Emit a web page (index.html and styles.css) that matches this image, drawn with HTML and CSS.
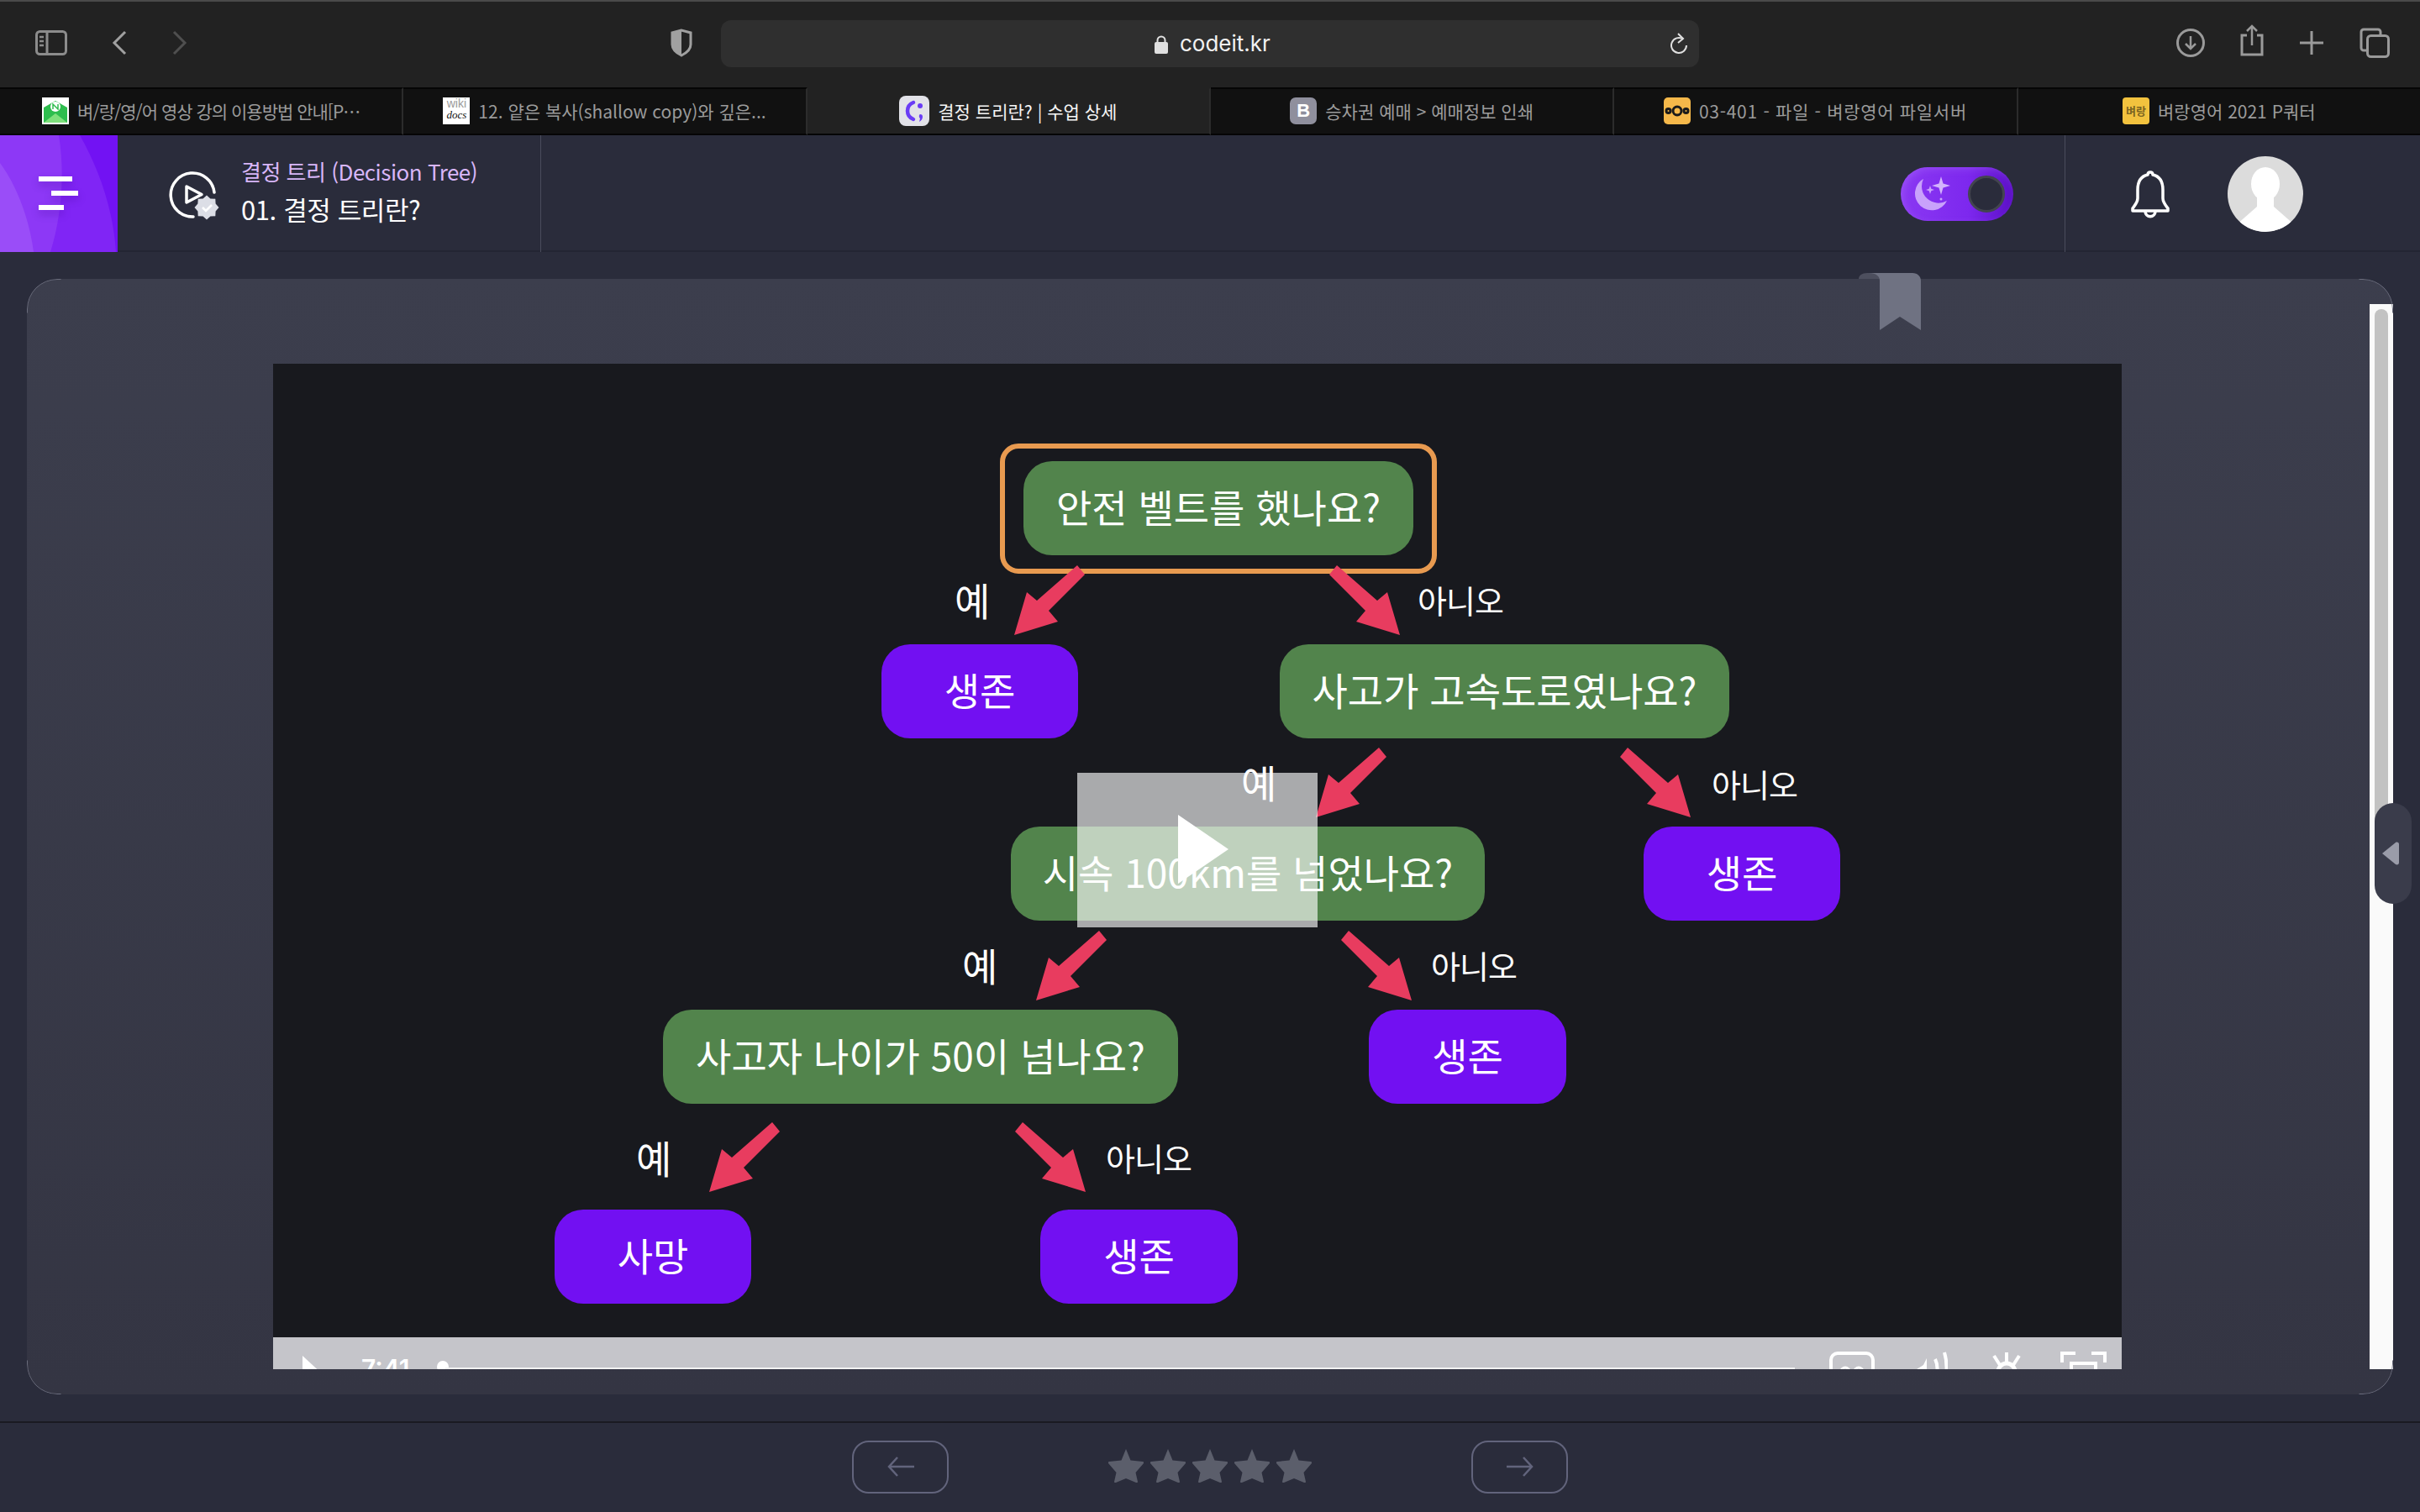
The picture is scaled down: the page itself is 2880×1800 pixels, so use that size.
FILE: index.html
```html
<!DOCTYPE html>
<html lang="ko">
<head>
  <meta charset="UTF-8">
  <title>결정 트리란? | 수업 상세</title>
  <link rel="stylesheet" href="styles.css">
</head>
<body>
  <!-- browser chrome -->
  <div class="toolbar">
    <svg class="tb-sidebar" width="38" height="30" viewBox="0 0 38 30"><rect x="1.5" y="1.5" width="35" height="27" rx="4" fill="none" stroke="#8c8c8c" stroke-width="3"/><path d="M14 2v26" stroke="#8c8c8c" stroke-width="3"/><path d="M5 8h5M5 13h5M5 18h5" stroke="#8c8c8c" stroke-width="2.5"/></svg>
    <svg class="tb-back" width="18" height="30" viewBox="0 0 18 30"><path d="M16 2 3 15l13 13" fill="none" stroke="#a0a0a0" stroke-width="3"/></svg>
    <svg class="tb-forward" width="18" height="30" viewBox="0 0 18 30"><path d="M2 2l13 13L2 28" fill="none" stroke="#4f4f4f" stroke-width="3"/></svg>
    <svg class="tb-shield" width="28" height="34" viewBox="0 0 28 34"><path d="M14 2 3 5v14c0 6 5 10 11 13 6-3 11-7 11-13V5z" fill="none" stroke="#a0a0a0" stroke-width="3"/><path d="M14 2 3 5v14c0 6 5 10 11 13z" fill="#a0a0a0"/></svg>
    <div class="urlbar">
      <svg width="16" height="23" viewBox="0 0 16 23"><path d="M3.5 11V7a4.500 4.500 0 0 1 9 0v4" fill="none" stroke="#e0e0e0" stroke-width="2"/><rect y="9" width="16" height="14" rx="2" fill="#e0e0e0"/></svg>
      <span class="url-text">codeit.kr</span>
      <svg class="url-reload" width="22" height="26" viewBox="0 0 22 26"><path d="M16 7.500A9 9 0 1 0 20 15" fill="none" stroke="#e0e0e0" stroke-width="2"/><path d="M10 1l6 6-6 5" fill="none" stroke="#e0e0e0" stroke-width="2"/></svg>
    </div>
    <svg class="tb-download" width="34" height="34" viewBox="0 0 34 34"><circle cx="17" cy="17" r="15.500" fill="none" stroke="#9a9a9a" stroke-width="3"/><path d="M17 9v15M11 18l6 6 6-6" fill="none" stroke="#9a9a9a" stroke-width="2.500"/></svg>
    <svg class="tb-share" width="30" height="38" viewBox="0 0 30 38"><path d="M9 13H3v23h24V13h-6" fill="none" stroke="#9a9a9a" stroke-width="3"/><path d="M15 25V2M9 8l6-6 6 6" fill="none" stroke="#9a9a9a" stroke-width="2.500"/></svg>
    <svg class="tb-plus" width="28" height="28" viewBox="0 0 28 28"><path d="M14 0v28M0 14h28" stroke="#9a9a9a" stroke-width="3"/></svg>
    <svg class="tb-windows" width="36" height="36" viewBox="0 0 36 36"><path d="M8 27H5a3 3 0 0 1-3-3V5a3 3 0 0 1 3-3h17a3 3 0 0 1 3 3v3" fill="none" stroke="#9a9a9a" stroke-width="3"/><rect x="9.500" y="9.500" width="25" height="25" rx="4" fill="none" stroke="#9a9a9a" stroke-width="3"/></svg>
  </div>

  <div class="tabs">
    <div class="tab">
      <svg class="favicon" width="32" height="32" viewBox="0 0 32 32"><rect width="32" height="32" fill="#fff"/><path d="M2 12 16 4l14 8v18H2z" fill="#2ebd4e"/><path d="M2 30 16 19l14 11z" fill="#7fe07c"/><circle cx="16" cy="11" r="6" fill="#fff"/><path d="M13 14V8l6 6V8" fill="none" stroke="#2ebd4e" stroke-width="1.500"/></svg>
      <span class="tab-title title-tight">벼/랑/영/어 영상 강의 이용방법 안내[P…</span>
    </div>
    <div class="tab">
      <div class="favicon fav-wiki"><span class="wiki-a">wiki</span><span class="wiki-b">docs</span></div>
      <span class="tab-title">12. 얕은 복사(shallow copy)와 깊은...</span>
    </div>
    <div class="tab active">
      <svg class="favicon" width="36" height="36" viewBox="0 0 36 36"><rect width="36" height="36" rx="8" fill="#e2e2e8"/><path d="M17 8c-5 2-7 6-7 10s2 8 7 10" fill="none" stroke="#6a3cf5" stroke-width="4.500" stroke-linecap="round"/><circle cx="25" cy="12" r="3" fill="#6a3cf5"/><path d="M25 22c2 0 3 1 3 3 0 3-2 5-4 6l1-4c-2-2-1-5 0-5z" fill="#6a3cf5"/></svg>
      <span class="tab-title">결정 트리란? | 수업 상세</span>
    </div>
    <div class="tab">
      <div class="favicon fav-b">B</div>
      <span class="tab-title">승차권 예매 &gt; 예매정보 인쇄</span>
    </div>
    <div class="tab">
      <svg class="favicon" width="32" height="32" viewBox="0 0 32 32"><rect width="32" height="32" rx="5" fill="#f5b84a"/><g fill="none" stroke="#1a1a1a" stroke-width="3"><circle cx="16" cy="16" r="5"/><circle cx="5.500" cy="16" r="2.500"/><circle cx="26.500" cy="16" r="2.500"/></g></svg>
      <span class="tab-title title-wide">03-401 - 파일 - 벼랑영어 파일서버</span>
    </div>
    <div class="tab">
      <div class="favicon fav-yellow">벼랑</div>
      <span class="tab-title">벼랑영어 2021 P쿼터</span>
    </div>
  </div>

  <!-- site header -->
  <header class="topbar">
    <div class="menu-btn">
      <svg class="menu-bg" width="140" height="139" viewBox="0 0 140 139"><rect width="140" height="139" fill="#7212f3"/><path d="M0 0h95c23 40 40 90 43 139H0z" fill="#8025f5"/><path d="M0 0h70c8 50 2 100-10 139H0z" fill="#8d38f6"/><path d="M0 33c20 27 35 67 40 106H0z" fill="#9a4df8"/></svg>
      <div class="bars"><i class="bar-a"></i><i class="bar-b"></i><i class="bar-c"></i></div>
    </div>
    <div class="course">
      <svg class="course-icon" width="62" height="60" viewBox="0 0 62 60"><path d="M55 26A26 26 0 1 0 30 55" fill="none" stroke="#fff" stroke-width="3.500" stroke-linecap="round"/><path d="M22 19l18 9.500L22 38z" fill="none" stroke="#fff" stroke-width="3.500" stroke-linejoin="round"/><path d="M60.500 44l-3.900 4.400-.3 5.900-5.900.3-4.400 3.900-4.400-3.900-5.900-.3-.3-5.900-3.900-4.400 3.900-4.400.3-5.900 5.900-.3 4.400-3.900 4.400 3.900 5.900.3.3 5.900z" fill="#dcdee6"/><path d="M41 44l4 4 7-7" fill="none" stroke="#fff" stroke-width="2.500"/></svg>
      <div class="course-text">
        <div class="course-name">결정 트리 (Decision Tree)</div>
        <div class="lesson-name">01. 결정 트리란?</div>
      </div>
    </div>
    <div class="toggle">
      <svg width="70" height="64" viewBox="0 0 70 64"><path d="M27 14A20 20 0 1 0 55 40 20 20 0 0 1 27 14z" fill="#c9a2fb"/><path d="M48 11l2.500 8.500L59 22l-8.500 2.500L48 33l-2.500-8.500L37 22l8.500-2.500z" fill="#d3b3fc"/><path d="M35 22l1.300 3.700L40 27l-3.700 1.300L35 32l-1.300-3.700L30 27l3.700-1.300z" fill="#c9a2fb"/><circle cx="48" cy="38" r="1.500" fill="#c9a2fb"/></svg>
      <div class="knob"></div>
    </div>
    <div class="user">
      <svg class="bell" width="50" height="58" viewBox="0 0 50 58"><path d="M25 3c-2 0-3 1-3 3C13 8 10 15 10 24v10c0 5-3 8-6 12v3h42v-3c-3-4-6-7-6-12V24c0-9-3-16-12-18 0-2-1-3-3-3z" fill="none" stroke="#fff" stroke-width="3.500" stroke-linejoin="round"/><path d="M19 49c0 9 12 9 12 0" fill="none" stroke="#fff" stroke-width="3.500"/></svg>
      <svg class="avatar" width="90" height="90" viewBox="0 0 90 90"><defs><clipPath id="round"><circle cx="45" cy="45" r="45"/></clipPath></defs><g clip-path="url(#round)"><rect width="90" height="90" fill="#dcdcdc"/><ellipse cx="45" cy="33" rx="17" ry="20" fill="#fff"/><path d="M35 40h20v20l25 22v10H10V82l25-22z" fill="#fff"/></g></svg>
    </div>
  </header>

  <!-- lesson -->
  <main class="main">
    <section class="card">
      <svg class="ribbon" width="74" height="68" viewBox="0 0 74 68"><path d="M0 7c0-4 4-7 10-7h15v7z" fill="#4d4f5e"/><path d="M12 0h52c6 0 10 4 10 9v59L49 52 25 68V9c0-5-4-9-13-9z" fill="#6f7282"/></svg>
      <div class="video">
        <div class="slide">
          <svg class="arrows" width="2200" height="1159" viewBox="325 433 2200 1159">
            <defs><path id="arrow" d="M0 0 15-51l12 10 48-42 9 11-43 43 11 13z" fill="#e83c5f"/></defs>
            <use href="#arrow" transform="translate(1207 756)"/>
            <use href="#arrow" transform="translate(1666 756) scale(-1 1)"/>
            <use href="#arrow" transform="translate(1566 973)"/>
            <use href="#arrow" transform="translate(2012 973) scale(-1 1)"/>
            <use href="#arrow" transform="translate(1233 1191)"/>
            <use href="#arrow" transform="translate(1680 1191) scale(-1 1)"/>
            <use href="#arrow" transform="translate(844 1419)"/>
            <use href="#arrow" transform="translate(1292 1419) scale(-1 1)"/>
          </svg>
          <div class="highlight"></div>
          <div class="node question n1">안전 벨트를 했나요?</div>
          <div class="node answer n2">생존</div>
          <div class="node question n3">사고가 고속도로였나요?</div>
          <div class="node question n4">시속 100km를 넘었나요?</div>
          <div class="node answer n5">생존</div>
          <div class="node question n6">사고자 나이가 50이 넘나요?</div>
          <div class="node answer n7">생존</div>
          <div class="node answer n8">사망</div>
          <div class="node answer n9">생존</div>
          <span class="hand yes y1">예</span>
          <span class="hand no o1">아니오</span>
          <span class="hand yes y2">예</span>
          <span class="hand no o2">아니오</span>
          <span class="hand yes y3">예</span>
          <span class="hand no o3">아니오</span>
          <span class="hand yes y4">예</span>
          <span class="hand no o4">아니오</span>
          <div class="play-overlay">
            <svg width="60" height="82" viewBox="0 0 60 82"><path d="M0 0 60 41 0 82z" fill="#fff"/></svg>
          </div>
        </div>
        <div class="controls">
          <svg class="ctl-play" width="30" height="30" viewBox="0 0 30 30"><path d="M0 0l26 24L0 30z" fill="#fff"/></svg>
          <span class="ctl-time">7:41</span>
          <i class="ctl-knob"></i>
          <i class="ctl-line"></i>
          <svg class="ctl-cc" width="54" height="30" viewBox="0 0 54 30"><rect x="2" y="2" width="50" height="40" rx="8" fill="none" stroke="#fff" stroke-width="4"/><circle cx="19" cy="24" r="5" fill="none" stroke="#fff" stroke-width="3"/><circle cx="35" cy="24" r="5" fill="none" stroke="#fff" stroke-width="3"/></svg>
          <svg class="ctl-vol" width="45" height="30" viewBox="0 0 45 30"><path d="M0 26l16-10 4-8v22H0z" fill="#fff"/><path d="M30 9c3 6 3 14 2 21M41 1c3 10 3 20 2 29" fill="none" stroke="#fff" stroke-width="4"/></svg>
          <svg class="ctl-gear" width="35" height="30" viewBox="0 0 35 30"><circle cx="18" cy="24" r="10" fill="none" stroke="#fff" stroke-width="5"/><path d="M18 1v12M3 5l7 11M33 5l-7 11" stroke="#fff" stroke-width="4"/></svg>
          <svg class="ctl-full" width="55" height="30" viewBox="0 0 55 30"><path d="M2 13V2h16M37 2h16v11" fill="none" stroke="#fff" stroke-width="4"/><rect x="13" y="14" width="29" height="24" fill="none" stroke="#fff" stroke-width="4"/></svg>
        </div>
      </div>
      <div class="scroll-panel"><div class="scroll-thumb"></div></div>
      <div class="side-handle">
        <svg width="20" height="28" viewBox="0 0 20 28"><path d="M0 14 16 1c2-1 4 0 4 2v22c0 2-2 3-4 2z" fill="#9a9ca9"/></svg>
      </div>
    </section>
  </main>

  <footer class="footer">
    <button class="nav-btn">
      <svg width="32" height="24" viewBox="0 0 32 24"><path d="M12 1 2 12l10 11M2 12h30" fill="none" stroke="#62647c" stroke-width="2.500"/></svg>
    </button>
    <div class="stars">
      <svg class="star" viewBox="0 0 42 40"><use href="#star"/></svg>
      <svg class="star" viewBox="0 0 42 40"><use href="#star"/></svg>
      <svg class="star" viewBox="0 0 42 40"><use href="#star"/></svg>
      <svg class="star" viewBox="0 0 42 40"><use href="#star"/></svg>
      <svg class="star" viewBox="0 0 42 40"><use href="#star"/></svg>
    </div>
    <button class="nav-btn">
      <svg width="32" height="24" viewBox="0 0 32 24"><path d="M20 1l10 11-10 11M30 12H0" fill="none" stroke="#62647c" stroke-width="2.500"/></svg>
    </button>
    <svg class="defs-only" width="0" height="0"><defs><path id="star" d="M21 0l5.500 13.500L41 15c1 0 1.500 1 1 2l-9.500 11 2.500 11c0 1-1 1.500-2 1l-12-5-12 5c-1 .5-2 0-2-1l2.500-11L0 17c-.5-1 0-2 1-2l14.500-1.500z" fill="#5b5e6b"/></defs></svg>
  </footer>
</body>
</html>
```

FILE: styles.css
```css
* {
  box-sizing: border-box;
}

html, body {
  margin: 0;
  padding: 0;
}

body {
  width: 2880px;
  height: 1800px;
  overflow: hidden;
  background: #2a2c3b;
  font-family: "Noto Sans CJK KR", "Noto Sans", sans-serif;
  color: #fff;
}

svg {
  display: block;
  flex: none;
}

/* browser toolbar */
.toolbar {
  display: flex;
  align-items: center;
  height: 104px;
  padding-left: 42px;
  padding-bottom: 4px;
  background: #222222;
  border-top: 2px solid #4a4a4a;
}

.tb-back { margin-left: 53px; }
.tb-forward { margin-left: 54px; }
.tb-shield { margin-left: 574px; }

.urlbar {
  display: flex;
  align-items: center;
  width: 1164px;
  height: 56px;
  margin-left: 33px;
  margin-top: 2px;
  padding-left: 516px;
  position: relative;
  background: #2f2f2f;
  border-radius: 12px;
}

.url-text {
  margin-left: 14px;
  margin-bottom: 2px;
  font-family: "Inter", sans-serif;
  font-size: 26px;
  color: #f2f2f2;
}

.url-reload {
  margin-left: auto;
  margin-right: 13px;
}

.tb-download { margin-left: 568px; }
.tb-share { margin-left: 41px; margin-bottom: 6px; }
.tb-plus { margin-left: 42px; }
.tb-windows { margin-left: 43px; }

/* browser tabs */
.tabs {
  display: flex;
  height: 57px;
  background: #111111;
}

.tab {
  flex: 1;
  display: flex;
  align-items: center;
  justify-content: center;
  gap: 10px;
  padding-bottom: 2px;
  border-top: 2px solid #050505;
  border-bottom: 2px solid #050505;
  border-right: 2px solid #2c2c2c;
}

.tab:last-child {
  border-right: none;
}

.tab.active {
  background: #222222;
  border-top-color: #222222;
}

.tab-title {
  font-size: 21px;
  color: #9b9b9b;
  white-space: nowrap;
}

.title-tight { letter-spacing: -1px; }
.title-wide { letter-spacing: 0.7px; }

.tab.active .tab-title {
  color: #f5f5f5;
}

.favicon {
  flex: none;
  width: 32px;
  height: 32px;
}

.active .favicon {
  width: 36px;
  height: 36px;
}

.fav-wiki {
  display: flex;
  flex-direction: column;
  align-items: center;
  background: #fff;
  line-height: 1;
}

.wiki-a {
  font-family: "Liberation Sans", sans-serif;
  font-size: 14px;
  color: #9a9a9a;
}

.wiki-b {
  font-family: "Liberation Serif", serif;
  font-style: italic;
  font-size: 13px;
  color: #111;
}

.fav-b {
  display: flex;
  align-items: center;
  justify-content: center;
  background: #8f8f9d;
  border-radius: 7px;
  font-family: "Liberation Sans", sans-serif;
  font-weight: bold;
  font-size: 22px;
  color: #fff;
}

.fav-yellow {
  display: flex;
  align-items: center;
  justify-content: center;
  background: #f2c23e;
  border-radius: 4px;
  font-size: 13px;
  font-weight: bold;
  color: #7a6420;
  white-space: nowrap;
  overflow: hidden;
}

/* site header */
.topbar {
  display: flex;
  align-items: center;
  height: 139px;
  box-shadow: inset 0 -2px 0 #232533;
}

.menu-btn {
  position: relative;
  width: 140px;
  height: 139px;
  flex: none;
}

.menu-bg {
  position: absolute;
  left: 0;
  top: 0;
}

.bars {
  position: relative;
  display: flex;
  flex-direction: column;
  gap: 11px;
  padding: 49px 0 0 46px;
}

.bars i {
  display: block;
  height: 6px;
  background: #fff;
  box-shadow: 0 5px 10px rgba(60, 0, 140, 0.3);
}

.bar-a { width: 40px; }
.bar-b { width: 32px; margin-left: 15px; }
.bar-c { width: 30px; }

.course {
  display: flex;
  align-items: center;
  width: 504px;
  height: 139px;
  padding-left: 60px;
  border-right: 1px solid #4a4c5c;
}

.course-icon {
  margin-top: 5px;
}

.course-text {
  margin-left: 25px;
  margin-bottom: 7px;
}

.course-name {
  font-size: 26px;
  line-height: 40px;
  color: #d8b6f8;
  letter-spacing: -0.5px;
}

.lesson-name {
  margin-top: 3px;
  font-size: 31px;
  line-height: 44px;
  letter-spacing: -0.4px;
  color: #fff;
}

.toggle {
  position: relative;
  display: flex;
  align-items: center;
  width: 134px;
  height: 64px;
  margin-left: auto;
  border-radius: 32px;
  background: linear-gradient(90deg, #8a38f2, #7d28ee 60%, #5c10c6);
  box-shadow: inset 3px 3px 8px rgba(190, 140, 255, 0.25);
}

.knob {
  position: absolute;
  right: 10px;
  top: 10px;
  width: 44px;
  height: 44px;
  border-radius: 50%;
  background: #2a2c3b;
  border: 3px solid #43454f;
}

.user {
  display: flex;
  align-items: center;
  width: 423px;
  height: 139px;
  margin-left: 61px;
  padding-left: 76px;
  border-left: 1px solid #4a4c5c;
}

.avatar {
  margin-left: 67px;
}

/* lesson card */
.main {
  height: 1392px;
  padding: 32px 32px 0;
}

.card {
  position: relative;
  display: flex;
  width: 2816px;
  height: 1328px;
  padding-top: 30px;
  padding-bottom: 30px;
  border-radius: 36px;
  background: linear-gradient(180deg, #3c3e4d, #343543);
}

/* the thin edge only shows around the corners */
.card::before {
  content: "";
  position: absolute;
  inset: 0;
  border: 1px solid #6a6c7c;
  border-radius: 36px;
  -webkit-mask:
    radial-gradient(circle at 0 0, #000 40px, transparent 41px),
    radial-gradient(circle at 100% 0, #000 40px, transparent 41px),
    radial-gradient(circle at 0 100%, #000 40px, transparent 41px),
    radial-gradient(circle at 100% 100%, #000 40px, transparent 41px);
  mask:
    radial-gradient(circle at 0 0, #000 40px, transparent 41px),
    radial-gradient(circle at 100% 0, #000 40px, transparent 41px),
    radial-gradient(circle at 0 100%, #000 40px, transparent 41px),
    radial-gradient(circle at 100% 100%, #000 40px, transparent 41px);
}

.ribbon {
  position: absolute;
  left: 2180px;
  top: -7px;
}

.video {
  position: relative;
  display: flex;
  flex-direction: column;
  width: 2200px;
  margin: 71px 0 0 293px;
  overflow: hidden;
}

.slide {
  position: relative;
  flex: 1;
  background: #18191e;
}

.arrows {
  position: absolute;
  left: 0;
  top: 0;
  z-index: 1;
}

.highlight {
  position: absolute;
  left: 865px;
  top: 95px;
  width: 520px;
  height: 155px;
  border: 6px solid #e89a50;
  border-radius: 22px;
}

.node {
  position: absolute;
  display: flex;
  align-items: center;
  justify-content: center;
  height: 112px;
  padding-bottom: 6px;
  border-radius: 34px;
  font-size: 46px;
  white-space: nowrap;
}

.question { background: #52844c; }
.answer { background: #7210f2; }

.n1 { left: 893px; top: 116px; width: 464px; }
.n2 { left: 724px; top: 334px; width: 234px; }
.n3 { left: 1198px; top: 334px; width: 535px; }
.n4 { left: 878px; top: 551px; width: 564px; }
.n5 { left: 1631px; top: 551px; width: 234px; }
.n6 { left: 464px; top: 769px; width: 613px; }
.n7 { left: 1304px; top: 769px; width: 235px; }
.n8 { left: 335px; top: 1007px; width: 234px; }
.n9 { left: 913px; top: 1007px; width: 235px; }

/* hand written yes / no marks */
.hand {
  position: absolute;
  line-height: 44px;
  font-weight: 400;
  white-space: nowrap;
}

.yes { font-size: 46px; }
.no { font-size: 38px; letter-spacing: -1px; }

.y1 { left: 811px; top: 258px; }
.o1 { left: 1362px; top: 259px; }
.y2 { left: 1152px; top: 475px; }
.o2 { left: 1712px; top: 478px; }
.y3 { left: 820px; top: 693px; }
.o3 { left: 1378px; top: 694px; }
.y4 { left: 432px; top: 922px; }
.o4 { left: 991px; top: 923px; }

.play-overlay {
  position: absolute;
  left: 957px;
  top: 487px;
  z-index: 2;
  width: 286px;
  height: 184px;
  padding: 50px 0 0 120px;
  background: rgba(255, 255, 255, 0.63);
}

/* player controls, cut off by the bottom of the frame */
.controls {
  display: flex;
  height: 38px;
  flex: none;
  position: relative;
  padding: 22px 0 0 35px;
  overflow: hidden;
  background: #c5c5ca;
}

.ctl-time {
  margin-left: 40px;
  margin-top: -3px;
  font-family: "Inter", sans-serif;
  font-weight: 600;
  font-size: 30px;
  line-height: 36px;
  color: #fff;
}

.ctl-knob {
  position: absolute;
  left: 195px;
  top: 28px;
  width: 14px;
  height: 14px;
  border-radius: 50%;
  background: #fff;
}

.ctl-line {
  position: absolute;
  left: 205px;
  right: 389px;
  bottom: 0;
  height: 2px;
  background: #f2f2f2;
}

.ctl-cc,
.ctl-vol,
.ctl-gear,
.ctl-full {
  position: absolute;
  top: 17px;
}

.ctl-cc { left: 1852px; }
.ctl-vol { left: 1948px; }
.ctl-gear { left: 2045px; }
.ctl-full { left: 2127px; }

/* right scroll strip */
.scroll-panel {
  width: 28px;
  margin-left: auto;
  padding: 6px;
  background: #fafafa;
}

.scroll-thumb {
  width: 16px;
  height: 640px;
  border-radius: 8px;
  background: #c2c2c2;
}

.side-handle {
  position: absolute;
  left: 2794px;
  top: 624px;
  display: flex;
  align-items: center;
  padding-left: 9px;
  width: 44px;
  height: 120px;
  border-radius: 22px;
  background: #3a3c4b;
}

/* footer */
.footer {
  display: flex;
  align-items: center;
  justify-content: center;
  gap: 190px;
  height: 108px;
  padding-bottom: 2px;
  border-top: 2px solid #1a1a22;
}

.nav-btn {
  display: flex;
  align-items: center;
  justify-content: center;
  width: 115px;
  height: 63px;
  padding: 0;
  background: none;
  border: 2px solid #62647c;
  border-radius: 20px;
}

.stars {
  display: flex;
  gap: 8px;
  margin-top: -2px;
}

.star {
  width: 42px;
  height: 40px;
}

.defs-only {
  position: absolute;
}
```
